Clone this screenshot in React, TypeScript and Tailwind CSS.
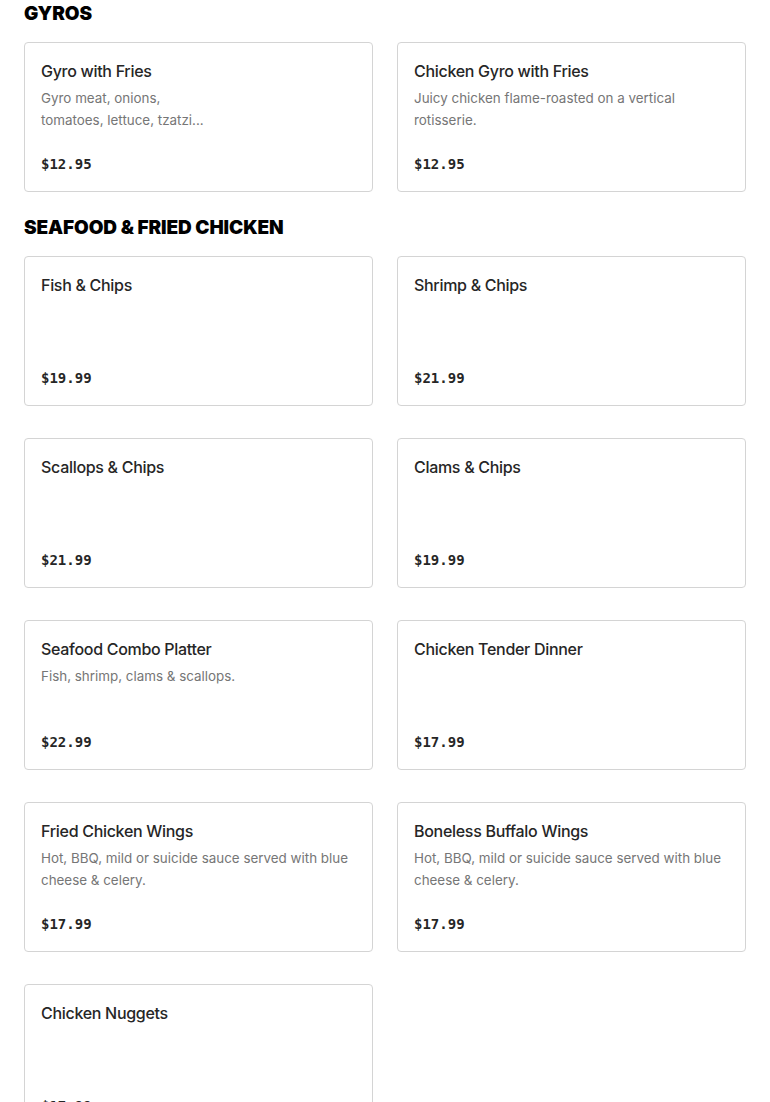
import React from "react";

type Item = { name: string; desc?: React.ReactNode; price: string };

const gyros: Item[] = [
  {
    name: "Gyro with Fries",
    desc: (
      <>
        Gyro meat, onions,
        <br />
        tomatoes, lettuce, tzatzi...
      </>
    ),
    price: "$12.95",
  },
  {
    name: "Chicken Gyro with Fries",
    desc: "Juicy chicken flame-roasted on a vertical rotisserie.",
    price: "$12.95",
  },
];

const seafood: Item[] = [
  { name: "Fish & Chips", price: "$19.99" },
  { name: "Shrimp & Chips", price: "$21.99" },
  { name: "Scallops & Chips", price: "$21.99" },
  { name: "Clams & Chips", price: "$19.99" },
  { name: "Seafood Combo Platter", desc: "Fish, shrimp, clams & scallops.", price: "$22.99" },
  { name: "Chicken Tender Dinner", price: "$17.99" },
  {
    name: "Fried Chicken Wings",
    desc: "Hot, BBQ, mild or suicide sauce served with blue cheese & celery.",
    price: "$17.99",
  },
  {
    name: "Boneless Buffalo Wings",
    desc: "Hot, BBQ, mild or suicide sauce served with blue cheese & celery.",
    price: "$17.99",
  },
  { name: "Chicken Nuggets", price: "$17.99" },
];

function MenuCard({ item }: { item: Item }) {
  return (
    <div className="h-[150px] rounded-[4px] border border-[#d4d4d4] bg-white p-4 flex flex-col justify-between">
      <div>
        <h3 className="text-[16px] leading-6 font-medium text-[#262626] tracking-[-0.3px]">{item.name}</h3>
        {item.desc && (
          <p className="mt-1 text-[13.4px] leading-[22px] text-[#767676]">{item.desc}</p>
        )}
      </div>
      <div className="font-['DejaVu_Sans_Mono',monospace] text-[14px] leading-6 font-bold text-[#262626] translate-y-[1px]">
        {item.price}
      </div>
    </div>
  );
}

function Section({ title, items, first }: { title: string; items: Item[]; first?: boolean }) {
  return (
    <section className={first ? "" : "mt-[22px]"}>
      <h2 className="text-[19px] leading-[27px] font-black text-black tracking-[-0.1px] mb-[15px]">{title}</h2>
      <div className="grid grid-cols-2 gap-x-6 gap-y-8">
        {items.map((it) => (
          <MenuCard key={it.name} item={it} />
        ))}
      </div>
    </section>
  );
}

export default function App() {
  return (
    <div className="min-h-screen bg-white px-6 font-['Inter','Noto_Sans',sans-serif]">
      <Section title="GYROS" items={gyros} first />
      <Section title="SEAFOOD & FRIED CHICKEN" items={seafood} />
    </div>
  );
}
